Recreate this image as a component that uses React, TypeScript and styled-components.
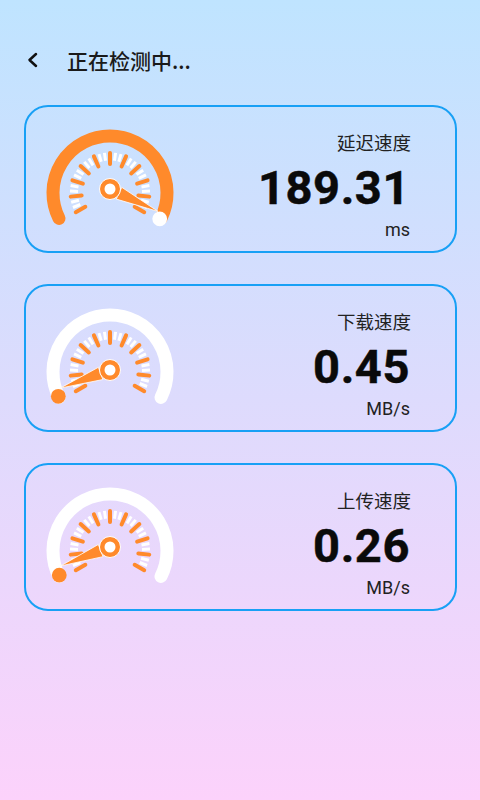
import React from "react";
import styled, { createGlobalStyle } from "styled-components";

const Global = createGlobalStyle`
  html, body { margin: 0; padding: 0; }
  body { font-family: Roboto, "Noto Sans CJK SC", sans-serif; }
`;

const Page = styled.div`
  width: 480px;
  height: 800px;
  overflow: hidden;
  background: linear-gradient(180deg, #bfe4ff 0%, #fcd2fb 100%);
  box-sizing: border-box;
  padding: 0 23px 0 24px;
`;

const Header = styled.header`
  height: 105px;
  display: flex;
  align-items: center;
  padding: 15px 0 0 1px;
  box-sizing: border-box;
  gap: 26px;
`;

const Title = styled.h1`
  margin: 0;
  font-size: 21px;
  font-weight: 500;
  color: #1a1a1a;
  font-family: "Noto Sans CJK SC", sans-serif;
`;

const List = styled.div`
  display: flex;
  flex-direction: column;
  gap: 31px;
`;

const Card = styled.section`
  height: 148px;
  box-sizing: border-box;
  border: 2px solid #18a0f5;
  border-radius: 24px;
  display: flex;
  align-items: center;
  justify-content: space-between;
  padding: 0 45px 0 14px;
`;

const Info = styled.div`
  align-self: stretch;
  display: flex;
  flex-direction: column;
  align-items: flex-end;
  padding-top: 23px;
`;

const Label = styled.div`
  font-family: "Noto Sans CJK SC", sans-serif;
  font-size: 18.5px;
  line-height: 24px;
  color: #222;
  margin-right: -1px;
`;

const Value = styled.div`
  font-family: Roboto, sans-serif;
  font-size: 47px;
  font-weight: 700;
  line-height: 60px;
  letter-spacing: 0.6px;
  margin-top: 4px;
  color: #0a0a0a;
  -webkit-text-stroke: 0.5px #0a0a0a;
`;

const Unit = styled.div`
  font-family: Roboto, sans-serif;
  font-size: 18px;
  line-height: 24px;
  color: #222;
`;

const ORANGE = "#ff8a2b";
const CX = 70;
const RING_Y = 74;

function polar(cy: number, r: number, deg: number) {
  const a = (deg * Math.PI) / 180;
  return { x: CX + r * Math.cos(a), y: cy - r * Math.sin(a) };
}

function Gauge({ active, needle, knobAt, hubY }: { active?: boolean; needle: number; knobAt: number; hubY: number }) {
  const majors = Array.from({ length: 11 }, (_, i) => 210 - i * 24);
  const minors: number[] = [];
  for (let i = 0; i < 10; i++) {
    minors.push(210 - i * 24 - 8, 210 - i * 24 - 16);
  }
  const s = polar(RING_Y, 57, 206.5);
  const e = polar(RING_Y, 57, -26.5);
  const tip = polar(hubY, 53, needle);
  const baseMid = polar(hubY, 10, needle);
  const a = ((needle + 90) * Math.PI) / 180;
  const dx = 6.5 * Math.cos(a);
  const dy = -6.5 * Math.sin(a);
  const knob = polar(hubY, 58, knobAt);
  return (
    <svg width="140" height="120" viewBox="0 0 140 120" aria-hidden="true">
      <path
        d={`M${s.x} ${s.y} A57 57 0 1 1 ${e.x} ${e.y}`}
        fill="none"
        stroke={active ? ORANGE : "#fff"}
        strokeWidth="13"
        strokeLinecap="round"
      />
      {minors.map((d) => {
        const p = polar(RING_Y - 0.5, 32, d);
        const q = polar(RING_Y - 0.5, 40, d);
        return <line key={d} x1={p.x} y1={p.y} x2={q.x} y2={q.y} stroke="#fff" strokeWidth="3" />;
      })}
      {majors.map((d) => {
        const p = polar(RING_Y - 0.5, 28.5, d);
        const q = polar(RING_Y - 0.5, 39.5, d);
        return <line key={d} x1={p.x} y1={p.y} x2={q.x} y2={q.y} stroke={ORANGE} strokeWidth="4" strokeLinecap="round" />;
      })}
      <circle cx={knob.x} cy={knob.y} r="7.4" fill={active ? "#fff" : ORANGE} />
      <polygon
        points={`${tip.x},${tip.y} ${baseMid.x + dx},${baseMid.y + dy} ${baseMid.x - dx},${baseMid.y - dy}`}
        fill={ORANGE}
        stroke="#fff"
        strokeWidth="0.8"
      />
      <circle cx={CX} cy={hubY} r="10.5" fill={ORANGE} stroke="#fff" strokeWidth="1" />
      <circle cx={CX} cy={hubY} r="5.5" fill="#fff" />
    </svg>
  );
}

const rows = [
  { label: "延迟速度", value: "189.31", unit: "ms", active: true, needle: -25, knobAt: -31, hubY: 70 },
  { label: "下载速度", value: "0.45", unit: "MB/s", needle: 200, knobAt: 207, hubY: 72 },
  { label: "上传速度", value: "0.26", unit: "MB/s", needle: 201, knobAt: 209, hubY: 70 },
];

export default function App() {
  return (
    <Page>
      <Global />
      <Header>
        <svg width="16" height="16" viewBox="0 0 16 16" aria-hidden="true">
          <path d="M11 2 L4.5 8 L11 14" fill="none" stroke="#111" strokeWidth="2.5" strokeLinecap="round" strokeLinejoin="round" />
        </svg>
        <Title>正在检测中...</Title>
      </Header>
      <List>
        {rows.map((r) => (
          <Card key={r.label}>
            <Gauge active={r.active} needle={r.needle} knobAt={r.knobAt} hubY={r.hubY} />
            <Info>
              <Label>{r.label}</Label>
              <Value>{r.value}</Value>
              <Unit>{r.unit}</Unit>
            </Info>
          </Card>
        ))}
      </List>
    </Page>
  );
}
